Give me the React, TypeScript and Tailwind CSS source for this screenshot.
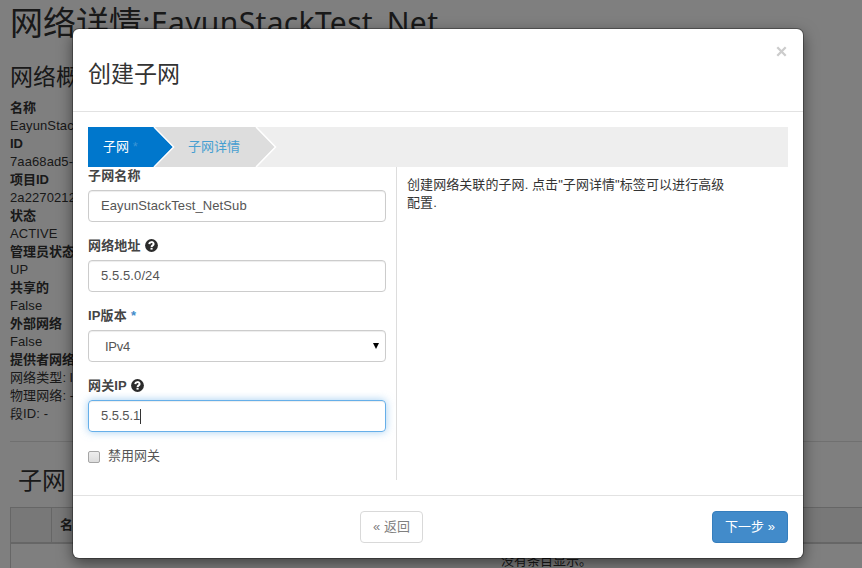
import type { ReactNode } from "react";

const details: { text: string; bold?: boolean }[] = [
  { text: "名称", bold: true },
  { text: "EayunStackTest_Net" },
  { text: "ID", bold: true },
  { text: "7aa68ad5-2" },
  { text: "项目ID", bold: true },
  { text: "2a2270212" },
  { text: "状态", bold: true },
  { text: "ACTIVE" },
  { text: "管理员状态", bold: true },
  { text: "UP" },
  { text: "共享的", bold: true },
  { text: "False" },
  { text: "外部网络", bold: true },
  { text: "False" },
  { text: "提供者网络", bold: true },
  { text: "网络类型: l" },
  { text: "物理网络: -" },
  { text: "段ID: -" },
];

function HelpIcon() {
  return (
    <svg className="mb-[2px] ml-1 h-[13px] w-[13px]" viewBox="0 0 13 13">
      <circle cx="6.5" cy="6.5" r="6.4" fill="#2b2b2b" />
      <path d="M4.3 5.1C4.4 2.5 8.6 2.5 8.6 4.9C8.6 6.4 6.6 6.4 6.6 8" fill="none" stroke="#fff" strokeWidth="2" />
      <rect x="5.5" y="8.8" width="2.1" height="1.8" fill="#fff" />
    </svg>
  );
}

function Field({ label, mark, children }: { label: string; mark?: ReactNode; children: ReactNode }) {
  return (
    <div className="mb-[15px] h-[55px]">
      <div className="mb-[5px] flex h-[18px] items-center font-bold tracking-[0.15px] text-[#444]">
        {label}
        {mark}
      </div>
      {children}
    </div>
  );
}

const control =
  "flex h-8 w-[298px] items-center rounded border px-3 text-[#555] tracking-[0.09px]";

export default function App() {
  return (
    <div className="relative h-[568px] w-[862px] overflow-hidden bg-white font-['Liberation_Sans','Noto_Sans_CJK_SC',sans-serif] text-[13px] leading-[18px] text-[#333]">
      <div className="pl-[10px]">
        <h1 className="flex h-[46px] items-center whitespace-nowrap font-['Open_Sans','Noto_Sans_CJK_SC',sans-serif] text-[33px] font-normal leading-[46px]">
          <span className="w-[141px]">网络详情:</span>
          <span className="font-['Noto_Sans','Noto_Sans_CJK_SC',sans-serif] text-[30px] font-normal tracking-[0.35px]">
            EayunStackTest_Net
          </span>
        </h1>
        <h2 className="mt-[15px] h-[38px] text-[23px] font-normal leading-[32px]">网络概况</h2>
        <div>
          {details.map((d, i) => (
            <div key={i} className={d.bold ? "h-[18px] font-bold" : "h-[18px] tracking-[0.1px]"}>
              {d.text}
            </div>
          ))}
        </div>
        <div className="mt-[18px] border-t border-[#e0e0e0]" />
        <h2 className="mt-[22px] h-[43px] pl-2 text-[24px] font-normal leading-[34px]">子网</h2>
        <div className="flex h-[37px] border-y border-b-2 border-l border-[#ccc] bg-[#f1f1f1]">
          <div className="w-[41px] border-r border-[#ccc]" />
          <div className="flex items-center pl-2 font-bold">名称</div>
        </div>
        <div className="h-10 border-l border-[#ccc] pl-[490px] pt-[8px]">没有条目显示。</div>
      </div>

      <div className="absolute inset-0 bg-black/50" />

      <div className="absolute left-[73px] top-[29px] flex h-[529px] w-[730px] flex-col rounded-md bg-white shadow-[0_5px_15px_rgba(0,0,0,0.5),0_0_0_1px_rgba(0,0,0,0.3)]">
        <header className="flex h-[83px] justify-between border-b border-[#e2e2e2] px-[15px]">
          <h3 className="mt-[29px] text-[23px] font-normal leading-[32px]">创建子网</h3>
          <svg className="mr-[1px] mt-[17px] h-[11px] w-[11px]" viewBox="0 0 11 11">
            <path d="M1.3 1.3L9.7 9.7M9.7 1.3L1.3 9.7" stroke="#ccc" strokeWidth="2.3" />
          </svg>
        </header>

        <main className="h-[383px] px-[15px] pt-[15px]">
          <nav className="relative h-10 bg-[#eee]">
            <svg className="absolute left-0 top-0 h-10 w-[190px]" viewBox="0 0 190 40">
              <path d="M66 0H168L187 20L168 40H66Z" fill="#ddd" />
              <path d="M168 0L187.5 20L168 40" fill="none" stroke="#fff" strokeWidth="1.5" />
              <path d="M0 0H65.5L85 20L65.5 40H0Z" fill="#07c" />
              <path d="M66 0L85.7 20L66 40" fill="none" stroke="#fff" strokeWidth="1.3" />
            </svg>
            <div className="relative flex h-10 items-center pl-[15px]">
              <span className="w-[85px] text-white">
                子网 <span className="text-[#3c95d5]">*</span>
              </span>
              <span className="text-[#469fd1]">子网详情</span>
            </div>
          </nav>

          <div className="flex h-[313px]">
            <section className="w-[309px] border-r border-[#ddd]">
              <Field label="子网名称">
                <div className={`${control} border-[#ccc] shadow-[inset_0_1px_1px_rgba(0,0,0,0.075)]`}>
                  EayunStackTest_NetSub
                </div>
              </Field>
              <Field label="网络地址" mark={<HelpIcon />}>
                <div className={`${control} border-[#ccc] shadow-[inset_0_1px_1px_rgba(0,0,0,0.075)]`}>5.5.5.0/24</div>
              </Field>
              <Field label="IP版本" mark={<span className="ml-1 text-[#428bca]">*</span>}>
                <div className={`${control} justify-between border-[#ccc] pl-4 pr-[6px] shadow-[inset_0_1px_1px_rgba(0,0,0,0.075)]`}>
                  <span className="pt-[2px] tracking-[-0.3px]">IPv4</span>
                  <svg className="h-[6px] w-[6px]" viewBox="0 0 6 6">
                    <path d="M0 0H6L3 6Z" fill="#000" />
                  </svg>
                </div>
              </Field>
              <Field label="网关IP" mark={<HelpIcon />}>
                <div className={`${control} border-[#66afe9] shadow-[inset_0_1px_1px_rgba(0,0,0,0.075),0_0_8px_rgba(102,175,233,0.6)]`}>
                  <span className="tracking-[-0.1px]">5.5.5.1</span>
                  <span className="h-[15px] w-px bg-[#333]" />
                </div>
              </Field>
              <label className="flex items-center text-[#555]">
                <span className="mr-2 mt-[2px] h-3 w-3 rounded-[2px] border border-[#a5a5a5] bg-linear-to-b from-[#eee] to-[#ddd]" />
                禁用网关
              </label>
            </section>
            <p className="w-[340px] pl-[10px] pt-[9px] tracking-[0.07px]">
              创建网络关联的子网. 点击"子网详情"标签可以进行高级
              <br />
              配置.
            </p>
          </div>
        </main>

        <footer className="flex h-[63px] justify-between border-t border-[#e2e2e2] pl-[287px] pr-[15px] pt-[15px]">
          <button className="h-8 w-[63px] rounded border border-[#d9d9d9] bg-white text-[#808080]">« 返回</button>
          <button className="h-8 w-[76px] rounded border border-[#357ebd] bg-[#428bca] text-white">下一步 »</button>
        </footer>
      </div>
    </div>
  );
}
